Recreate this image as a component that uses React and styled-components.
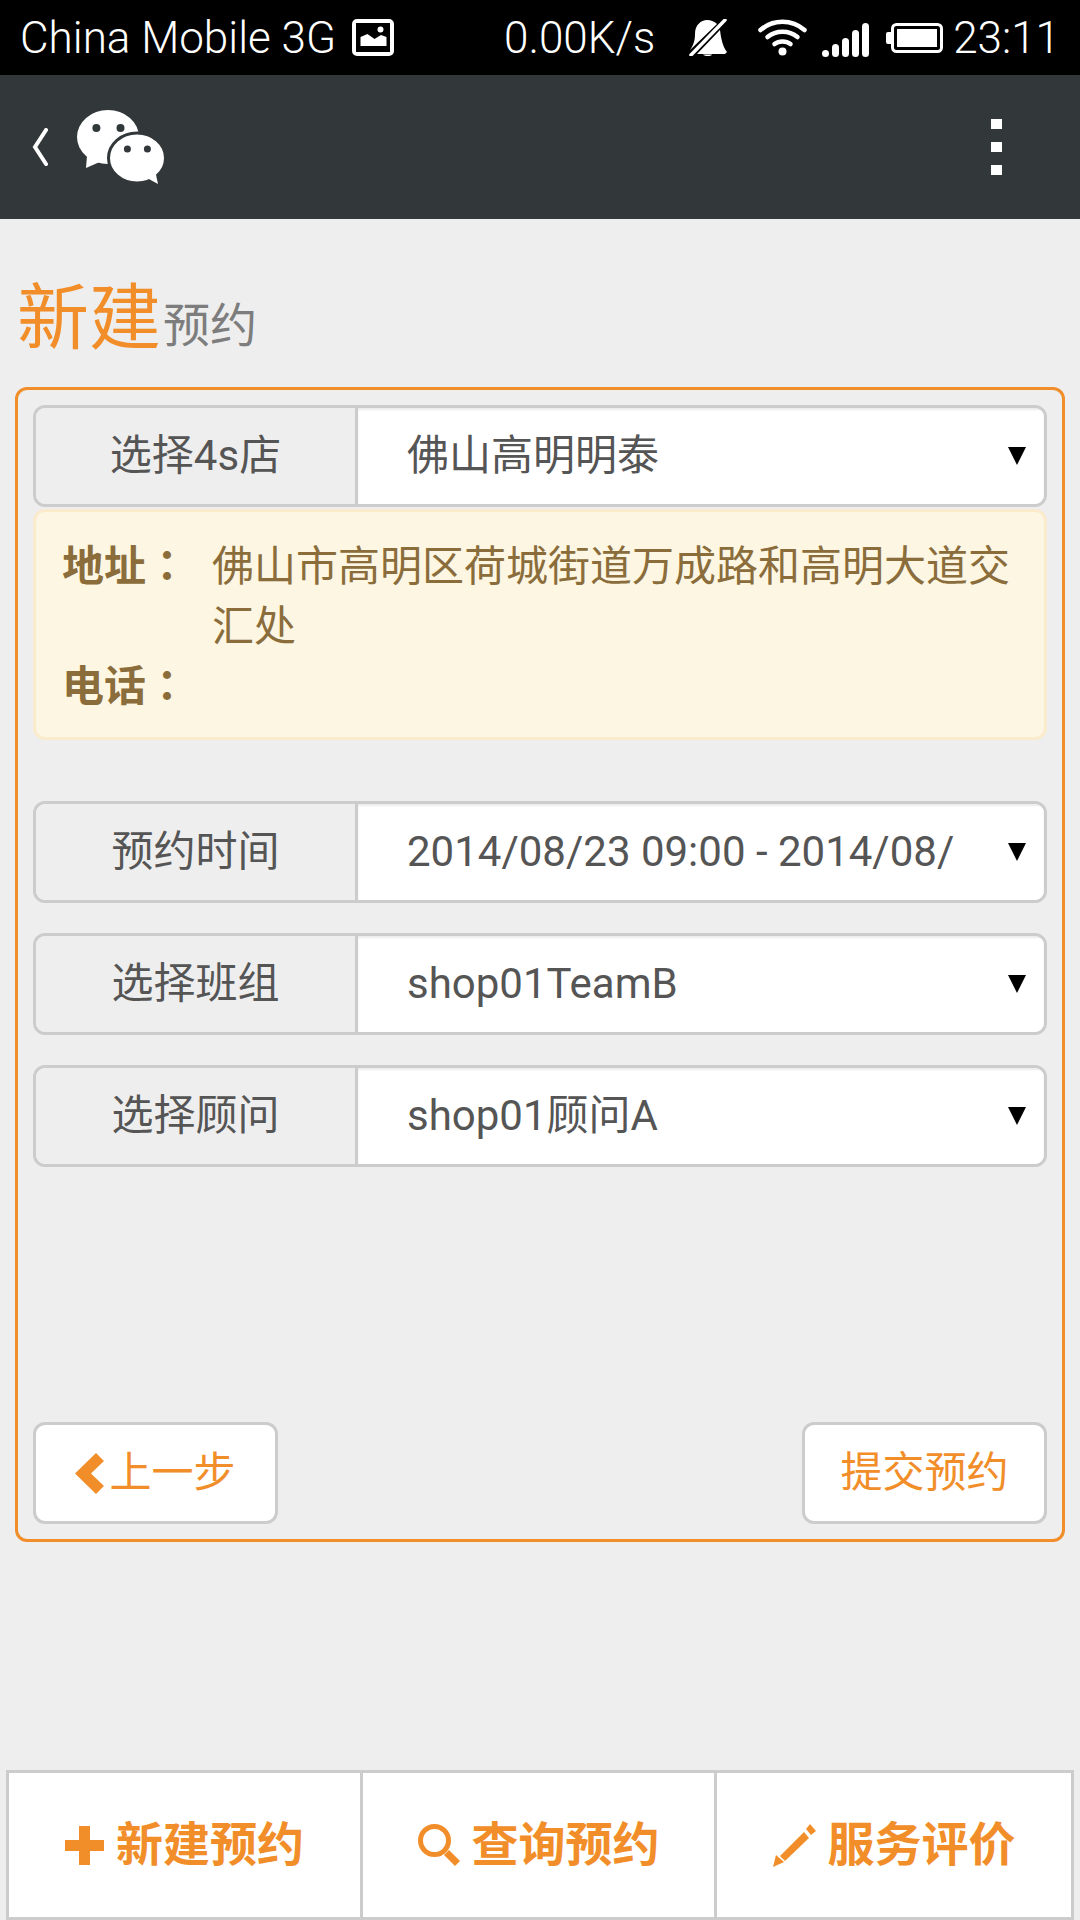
import React from "react";
import styled, { createGlobalStyle } from "styled-components";

const GlobalStyle = createGlobalStyle`
  html, body {
    margin: 0;
    padding: 0;
    background: #eeeeee;
  }
  * {
    box-sizing: border-box;
  }
`;

const orange = "#f18e2a";
const fontStack = `Roboto, "Noto Sans CJK SC", sans-serif`;

//
const Page = styled.div`
  width: 1080px;
  height: 1920px;
  display: flex;
  flex-direction: column;
  background: #eeeeee;
  font-family: ${fontStack};
  overflow: hidden;
`;
const StatusBar = styled.div`
  height: 75px;
  flex: none;
  display: flex;
  align-items: center;
  padding: 0 20px;
  background: #000;
  color: #fff;
  font-family: Roboto, sans-serif;
  font-weight: 300;
  font-size: 44px;
`;
const Carrier = styled.span`
  margin-right: 16px;
`;
const Speed = styled.span`
  margin-left: 110px;
`;
const StatusRight = styled.div`
  margin-left: auto;
  display: flex;
  align-items: center;
`;
const StatusIcon = styled.svg`
  display: block;
  flex: none;
  margin-right: ${(props) => props.gap || 0}px;
  fill: #fff;
`;
const Clock = styled.span`
  margin-left: 10px;
`;
const AppBar = styled.div`
  height: 144px;
  flex: none;
  display: flex;
  align-items: center;
  padding: 0 78px 0 32px;
  background: #32373a;
`;
const Dots = styled.div`
  margin-left: auto;
  display: flex;
  flex-direction: column;
  gap: 13px;
`;
const Dot = styled.span`
  display: block;
  width: 11px;
  height: 10px;
  background: #fff;
`;
const Heading = styled.h1`
  margin: 0;
  padding: 52px 0 26px 17px;
  height: 168px;
  flex: none;
  display: flex;
  align-items: flex-end;
  font-weight: 400;
  font-size: 47px;
  line-height: 70px;
  color: #7d7d7d;
`;
const HeadingStrong = styled.span`
  font-size: 72px;
  line-height: 84px;
  color: ${orange};
  margin-right: 2px;
`;
const Panel = styled.div`
  height: 1155px;
  flex: none;
  margin: 0 15px;
  padding: 15px;
  display: flex;
  flex-direction: column;
  border: 3px solid ${orange};
  border-radius: 12px;
`;
const Field = styled.div`
  height: 102px;
  flex: none;
  display: flex;
  margin-bottom: ${(props) => props.bottom || 0}px;
  border: 3px solid #cccccc;
  border-radius: 12px;
  overflow: hidden;
  font-size: 42px;
  line-height: 60px;
  color: #555555;
`;
const FieldLabel = styled.div`
  width: 322px;
  flex: none;
  display: flex;
  align-items: center;
  justify-content: center;
  background: #eeeeee;
  border-right: 3px solid #cccccc;
`;
const FieldValue = styled.div`
  flex: 1;
  display: flex;
  align-items: center;
  justify-content: space-between;
  padding: 0 18px 0 49px;
  background: #fff;
  box-shadow: inset 0 2px 2px rgba(0, 0, 0, 0.08);
  white-space: nowrap;
`;
const Arrow = styled.span`
  width: 0;
  height: 0;
  border-left: 9px solid transparent;
  border-right: 9px solid transparent;
  border-top: 18px solid #000;
`;
const Notice = styled.div`
  height: 231px;
  flex: none;
  margin: 2px 0 61px;
  padding: 25px 20px 0 26px;
  display: grid;
  grid-template-columns: 150px 1fr;
  align-content: start;
  background: #fdf6e3;
  border: 3px solid #faebcc;
  border-radius: 12px;
  font-size: 42px;
  line-height: 60px;
  color: #8a6d3b;
`;
const NoticeLabel = styled.div`
  font-family: Roboto, "Noto Sans CJK TC", sans-serif;
  font-weight: 700;
`;
const Actions = styled.div`
  margin-top: auto;
  display: flex;
  justify-content: space-between;
`;
const ActionButton = styled.div`
  width: 245px;
  height: 102px;
  display: flex;
  align-items: center;
  justify-content: center;
  gap: 5px;
  background: #fff;
  border: 3px solid #cccccc;
  border-radius: 12px;
  font-size: 42px;
  line-height: 60px;
  color: ${orange};
`;
const Footer = styled.div`
  margin: auto 6px 0;
  height: 150px;
  flex: none;
  display: grid;
  grid-template-columns: 351px 354px 1fr;
  background: #fff;
  border: 3px solid #cccccc;
`;
const Tab = styled.div`
  display: flex;
  align-items: center;
  justify-content: center;
  gap: 12px;
  border-left: ${(props) => (props.first ? "none" : "3px solid #cccccc")};
  font-size: 47px;
  line-height: 60px;
  font-weight: 700;
  color: ${orange};
`;
const TabIcon = styled.svg`
  display: block;
  flex: none;
  fill: ${orange};
`;

//
const ImageIcon = () => (
  <StatusIcon width="42" height="37" viewBox="0 0 42 37">
    <path
      fillRule="evenodd"
      d="M5 0h32a5 5 0 0 1 5 5v27a5 5 0 0 1-5 5H5a5 5 0 0 1-5-5V5a5 5 0 0 1 5-5zm-1 4v29h34V4zM8.500 27v-9l7-3 7 5 6.500-4 5.500 2v9zM28.500 13.500a3 3 0 1 1 0-6 3 3 0 0 1 0 6z"
    />
  </StatusIcon>
);

const MuteIcon = () => (
  <StatusIcon width="38" height="37" viewBox="0 0 38 37" gap="31">
    <path d="M1 31C5 26 6 20 6 15 6 6 12 1 18 1c4 0 8 2 10 4z" />
    <path d="M31 11c1 9 3 17 7 22l-2 2H8z" />
    <path d="M14 35.500h9c-1 2-7 2-9 0z" />
    <path d="M36 1 L2 36" stroke="#fff" strokeWidth="3.500" strokeLinecap="round" />
  </StatusIcon>
);

const WifiIcon = () => (
  <StatusIcon width="49" height="37" viewBox="0 0 49 37" gap="15">
    <g fill="none" stroke="#fff" strokeWidth="4.500" strokeLinecap="round">
      <path d="M2.500 11C15 0 34 0 46.500 11" />
      <path d="M9.500 18C18 11 31 11 39.500 18" />
      <path d="M16.500 25C21 21.500 28 21.500 32.500 25" />
    </g>
    <circle cx="24.500" cy="32.500" r="4" />
  </StatusIcon>
);

const SignalIcon = () => (
  <StatusIcon width="47" height="34" viewBox="0 0 47 34" gap="17" style={{ marginTop: 5 }}>
    <rect x="0" y="27" width="7" height="7" rx="3.500" />
    <rect x="10" y="21" width="7" height="13" rx="3.500" />
    <rect x="20" y="15" width="7" height="19" rx="3.500" />
    <rect x="30" y="7" width="7" height="27" rx="3.500" />
    <rect x="40" y="0" width="7" height="34" rx="3.500" />
  </StatusIcon>
);

const BatteryIcon = () => (
  <StatusIcon width="57" height="30" viewBox="0 0 57 30">
    <path d="M5 9H2a2 2 0 0 0-2 2v8a2 2 0 0 0 2 2h3z" />
    <rect x="6.500" y="1.500" width="49" height="27" rx="4" fill="none" stroke="#fff" strokeWidth="3" />
    <rect x="11" y="6" width="40" height="18" />
  </StatusIcon>
);

const BackIcon = () => (
  <svg width="16" height="38" viewBox="0 0 16 38" style={{ flex: "none" }}>
    <path
      d="M14 2 L3 19 L14 36"
      fill="none"
      stroke="#fff"
      strokeWidth="4"
      strokeLinecap="round"
      strokeLinejoin="miter"
    />
  </svg>
);

const WechatIcon = () => (
  <svg
    width="89"
    height="75"
    viewBox="0 0 89 75"
    style={{ flex: "none", marginLeft: 29 }}
  >
    <ellipse cx="31" cy="27" rx="31" ry="27" fill="#fff" />
    <path d="M10 46 L9 58 L25 51 Z" fill="#fff" />
    <ellipse cx="60" cy="48" rx="28.500" ry="25" fill="#fff" stroke="#32373a" strokeWidth="3" />
    <path d="M70 68 L81 74 L78 60 Z" fill="#fff" />
    <circle cx="19.400" cy="18" r="4" fill="#32373a" />
    <circle cx="43.500" cy="18" r="4" fill="#32373a" />
    <circle cx="50.400" cy="39" r="3.500" fill="#32373a" />
    <circle cx="70.400" cy="39" r="3.500" fill="#32373a" />
  </svg>
);

const ChevronIcon = () => (
  <TabIcon width="29" height="41" viewBox="0 0 29 41">
    <path d="M21 0 L29 8 L16 20.500 L29 33 L21 41 L0 20.500 Z" />
  </TabIcon>
);

const PlusIcon = () => (
  <TabIcon width="39" height="39" viewBox="0 0 39 39">
    <path d="M14 0h11v14h14v11H25v14H14V25H0V14h14z" />
  </TabIcon>
);

const SearchIcon = () => (
  <TabIcon width="42" height="42" viewBox="0 0 42 42">
    <circle cx="16.500" cy="16.500" r="14" fill="none" stroke={orange} strokeWidth="5" />
    <path d="M26 31 L31 26 L42 37 L37 42 Z" />
  </TabIcon>
);

const PencilIcon = () => (
  <TabIcon width="43" height="43" viewBox="0 0 43 43">
    <path d="M7 32 L31 8 L36 14 L12 37 Z" />
    <path d="M33 5 L37 0 L43 7 L38 11 Z" />
    <path d="M3 31 L11 38 L0 43 Z" />
  </TabIcon>
);

const fields = [
  { label: "预约时间", value: "2014/08/23 09:00 - 2014/08/" },
  { label: "选择班组", value: "shop01TeamB" },
  { label: "选择顾问", value: "shop01顾问A" },
];

const tabs = [
  { label: "新建预约", icon: <PlusIcon /> },
  { label: "查询预约", icon: <SearchIcon /> },
  { label: "服务评价", icon: <PencilIcon /> },
];

const App = () => {
  return (
    <Page>
      <GlobalStyle />
      <StatusBar>
        <Carrier>China Mobile 3G</Carrier>
        <ImageIcon />
        <Speed>0.00K/s</Speed>
        <StatusRight>
          <MuteIcon />
          <WifiIcon />
          <SignalIcon />
          <BatteryIcon />
          <Clock>23:11</Clock>
        </StatusRight>
      </StatusBar>
      <AppBar>
        <BackIcon />
        <WechatIcon />
        <Dots>
          <Dot />
          <Dot />
          <Dot />
        </Dots>
      </AppBar>
      <Heading>
        <HeadingStrong>新建</HeadingStrong>预约
      </Heading>
      <Panel>
        <Field>
          <FieldLabel>选择4s店</FieldLabel>
          <FieldValue>
            佛山高明明泰
            <Arrow />
          </FieldValue>
        </Field>
        <Notice>
          <NoticeLabel>地址：</NoticeLabel>
          <div>佛山市高明区荷城街道万成路和高明大道交汇处</div>
          <NoticeLabel>电话：</NoticeLabel>
        </Notice>
        {fields.map((field) => (
          <Field key={field.label} bottom={30}>
            <FieldLabel>{field.label}</FieldLabel>
            <FieldValue>
              {field.value}
              <Arrow />
            </FieldValue>
          </Field>
        ))}
        <Actions>
          <ActionButton>
            <ChevronIcon />
            上一步
          </ActionButton>
          <ActionButton>提交预约</ActionButton>
        </Actions>
      </Panel>
      <Footer>
        {tabs.map((tab, i) => (
          <Tab key={tab.label} first={i === 0}>
            {tab.icon}
            {tab.label}
          </Tab>
        ))}
      </Footer>
    </Page>
  );
};

export default App;
